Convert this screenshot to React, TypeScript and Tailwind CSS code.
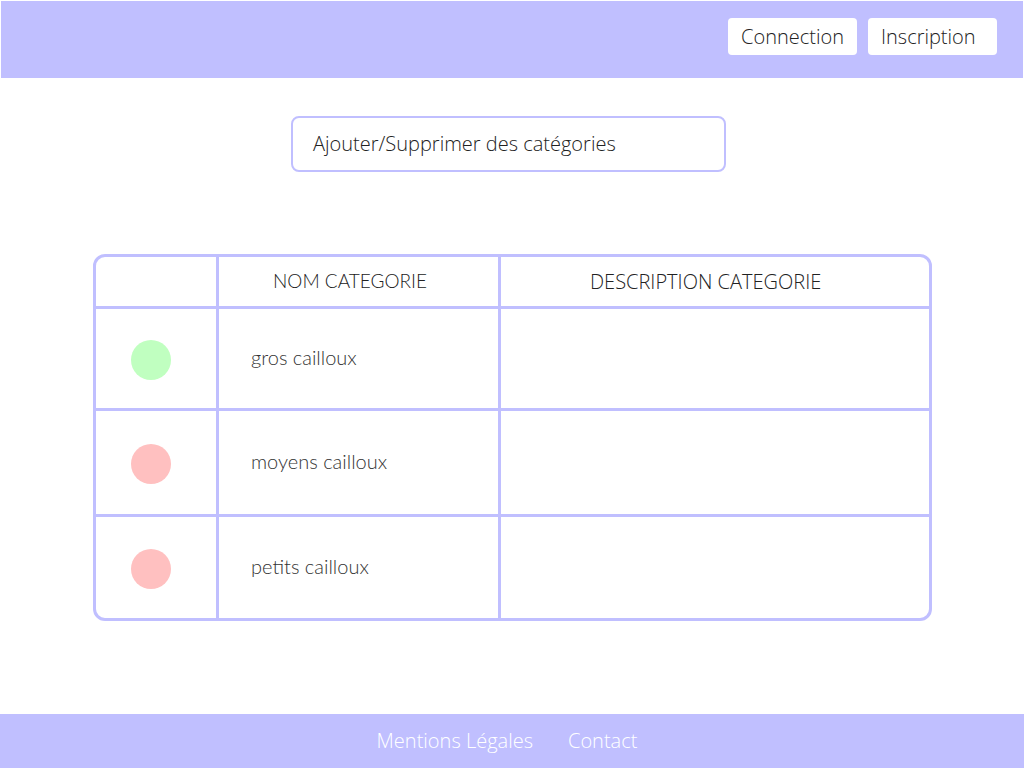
import React from "react";

const open = { fontFamily: '"Open Sans", "Liberation Sans", sans-serif' };
const lato = { fontFamily: 'Lato, "Open Sans", "Liberation Sans", sans-serif' };

const rows = [
  { name: "gros cailloux", color: "bg-[#c0ffc0]", h: "h-[102px]" },
  { name: "moyens cailloux", color: "bg-[#ffc0c0]", h: "h-[106px]" },
  { name: "petits cailloux", color: "bg-[#ffc0c0]", h: "h-[101px]" },
];

export default function App() {
  return (
    <div className="w-[1024px] h-[768px] bg-white flex flex-col text-[#222]" style={open}>
      <div className="pt-px px-px">
        <header className="h-[77px] bg-[#c0bfff] flex items-start justify-end pt-[17px] pr-[26px] gap-[11px]">
          <button className="w-[129px] h-[37px] bg-white rounded-[4px] text-[20px] font-light leading-none text-[#222] text-left pl-[13px] pt-[1px]" style={open}>
            Connection
          </button>
          <button className="w-[129px] h-[37px] bg-white rounded-[4px] text-[20px] font-light leading-none text-[#222] text-left pl-[13px] pt-[1px]" style={open}>
            Inscription
          </button>
        </header>
      </div>

      <main className="flex-1 flex flex-col">
        <div className="pl-[291px] pt-[38px]">
          <div className="w-[435px] h-[56px] border-2 border-[#c0bfff] rounded-[8px] flex items-center pl-[20px] text-[20px] font-light text-[#222]">
            Ajouter/Supprimer des catégories
          </div>
        </div>

        <div className="pl-[93px] pt-[82px]">
          <div className="w-[839px] border-[3px] border-[#c0bfff] rounded-[12px] flex flex-col">
            <div className="flex h-[52px] border-b-[3px] border-[#c0bfff]">
              <div className="w-[123px] border-r-[3px] border-[#c0bfff]" />
              <div className="w-[282px] border-r-[3px] border-[#c0bfff] flex items-center pl-[54px] text-[19px] font-light text-[#222]" style={lato}>
                NOM CATEGORIE
              </div>
              <div className="flex-1 flex items-center pl-[89px] text-[20px] font-light text-[#222]" style={open}>
                DESCRIPTION CATEGORIE
              </div>
            </div>
            {rows.map((r, i) => (
              <div
                key={r.name}
                className={`flex ${r.h} ${i < rows.length - 1 ? "border-b-[3px] border-[#c0bfff]" : ""}`}
              >
                <div className="w-[123px] border-r-[3px] border-[#c0bfff] flex items-center pl-[35px] pt-[3px]">
                  <div className={`w-[40px] h-[40px] rounded-full ${r.color}`} />
                </div>
                <div className="w-[282px] border-r-[3px] border-[#c0bfff] flex items-center pl-[32px] pb-[3px] text-[20px] font-light text-[#333]" style={lato}>
                  {r.name}
                </div>
                <div className="flex-1" />
              </div>
            ))}
          </div>
        </div>
      </main>

      <footer className="h-[54px] bg-[#c0bfff] flex items-center justify-center gap-[35px] text-white text-[20px] font-light pr-[10px]">
        <span>Mentions Légales</span>
        <span>Contact</span>
      </footer>
    </div>
  );
}
